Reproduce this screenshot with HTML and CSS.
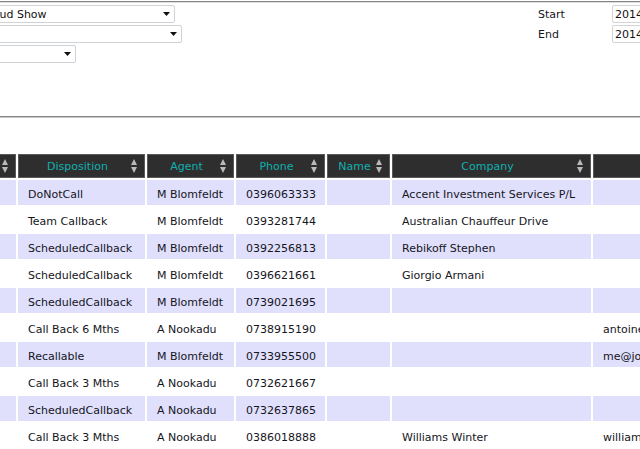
FILE: index.html
```html
<!DOCTYPE html>
<html>
<head>
<meta charset="utf-8">
<title>Call list</title>
<link rel="stylesheet" href="styles.css">
</head>
<body>
<div class="page">
  <div class="filters">
    <div class="selects">
      <div class="select w1"><span>Cloud Show</span><svg class="caret" width="7" height="4" viewBox="0 0 7 4"><polygon points="0,0 7,0 3.5,4" fill="#111"/></svg></div>
      <div class="select w2"><span></span><svg class="caret" width="7" height="4" viewBox="0 0 7 4"><polygon points="0,0 7,0 3.5,4" fill="#111"/></svg></div>
      <div class="select w3"><span></span><svg class="caret" width="7" height="4" viewBox="0 0 7 4"><polygon points="0,0 7,0 3.5,4" fill="#111"/></svg></div>
    </div>
    <div class="dates">
      <label class="date-label">Start</label>
      <div class="date-input">2014-06-01</div>
      <label class="date-label">End</label>
      <div class="date-input">2014-06-30</div>
    </div>
  </div>

  <table class="grid">
    <thead>
      <tr>
        <th class="c-id">Date<span class="sort"></span></th>
        <th class="c-disp">Disposition<span class="sort"></span></th>
        <th class="c-agent">Agent<span class="sort"></span></th>
        <th class="c-phone">Phone<span class="sort"></span></th>
        <th class="c-name">Name<span class="sort"></span></th>
        <th class="c-company">Company<span class="sort"></span></th>
        <th class="c-email">Email<span class="sort"></span></th>
        <th class="c-more">Notes<span class="sort"></span></th>
      </tr>
    </thead>
    <tbody>
      <tr><td></td><td>DoNotCall</td><td>M Blomfeldt</td><td>0396063333</td><td></td><td>Accent Investment Services P/L</td><td></td><td></td></tr>
      <tr><td></td><td>Team Callback</td><td>M Blomfeldt</td><td>0393281744</td><td></td><td>Australian Chauffeur Drive</td><td></td><td></td></tr>
      <tr><td></td><td>ScheduledCallback</td><td>M Blomfeldt</td><td>0392256813</td><td></td><td>Rebikoff Stephen</td><td></td><td></td></tr>
      <tr><td></td><td>ScheduledCallback</td><td>M Blomfeldt</td><td>0396621661</td><td></td><td>Giorgio Armani</td><td></td><td></td></tr>
      <tr><td></td><td>ScheduledCallback</td><td>M Blomfeldt</td><td>0739021695</td><td></td><td></td><td></td><td></td></tr>
      <tr><td></td><td>Call Back 6 Mths</td><td>A Nookadu</td><td>0738915190</td><td></td><td></td><td>antoine@ozemail.com.au</td><td></td></tr>
      <tr><td></td><td>Recallable</td><td>M Blomfeldt</td><td>0733955500</td><td></td><td></td><td>me@johnsmith.com.au</td><td></td></tr>
      <tr><td></td><td>Call Back 3 Mths</td><td>A Nookadu</td><td>0732621667</td><td></td><td></td><td></td><td></td></tr>
      <tr><td></td><td>ScheduledCallback</td><td>A Nookadu</td><td>0732637865</td><td></td><td></td><td></td><td></td></tr>
      <tr><td></td><td>Call Back 3 Mths</td><td>A Nookadu</td><td>0386018888</td><td></td><td>Williams Winter</td><td>william@williamswinter.com.au</td><td></td></tr>
    </tbody>
  </table>
</div>
</body>
</html>
```

FILE: styles.css
```css
html, body {
  margin: 0;
  padding: 0;
  background: #fff;
  overflow: hidden;
}

body {
  font-family: "DejaVu Sans", Verdana, sans-serif;
  font-size: 11px;
  color: #15151c;
}

.page {
  margin-left: -60px;
  width: 1100px;
}

/* filter panel */
.filters {
  box-sizing: border-box;
  height: 117px;
  margin-top: 1px;
  padding: 3px 0 0 38px;
  border-top: 1px solid #858585;
  border-bottom: 1px solid #c8c8c8;
  box-shadow: inset 0 1px 0 #dedede, inset 0 -1px 0 #858585;
  display: flex;
  align-items: flex-start;
}

.selects {
  width: 560px;
  display: flex;
  flex-direction: column;
  align-items: flex-start;
  gap: 2px;
}

.select {
  box-sizing: border-box;
  height: 18px;
  border: 1px solid #cfd2d6;
  border-radius: 2px;
  padding: 1px 4px 0 3px;
  display: flex;
  align-items: center;
  justify-content: space-between;
  background: #fff;
  font-size: 11px;
  color: #111;
}

.select.w1 { width: 197px; }
.select.w2 { width: 204px; }
.select.w3 { width: 98px; }

.caret {
  flex: none;
  display: block;
  margin-top: -1px;
}

.dates {
  display: grid;
  grid-template-columns: 74px 120px;
  row-gap: 2px;
  align-items: center;
}

.date-label {
  line-height: 18px;
  padding-top: 1px;
  height: 18px;
  box-sizing: border-box;
  color: #15151c;
}

.date-input {
  box-sizing: border-box;
  height: 18px;
  line-height: 16px;
  border: 1px solid #d4d4d4;
  border-radius: 2px;
  padding: 1px 2px 0;
  color: #111;
}

/* grid */
.grid {
  margin-top: 34px;
  border-collapse: separate;
  border-spacing: 2px;
  table-layout: fixed;
  width: 737px;
}

.grid th,
.grid td {
  box-sizing: border-box;
  white-space: nowrap;
  overflow: hidden;
}

.grid th {
  position: relative;
  height: 24px;
  padding: 1px 18px 0 10px;
  background: #2e2e2e;
  border: 1px solid #5a5a5a;
  color: #10b0ae;
  font-weight: normal;
  text-align: center;
}

.sort {
  position: absolute;
  right: 6px;
  top: 4px;
  width: 7px;
  height: 14px;
}

.sort::before,
.sort::after {
  content: "";
  position: absolute;
  left: 0;
  border-left: 3.5px solid transparent;
  border-right: 3.5px solid transparent;
}

.sort::before {
  top: 0;
  border-bottom: 6px solid #b9b9b9;
}

.sort::after {
  bottom: 0;
  border-top: 6px solid #b9b9b9;
}

.grid td {
  height: 25px;
  padding: 4px 10px 0;
  text-align: left;
}

.grid tbody tr:nth-child(odd) td {
  background: #e0e0fd;
}

.c-id { width: 74px; }
.c-disp { width: 127px; }
.c-agent { width: 87px; }
.c-phone { width: 89px; }
.c-name { width: 63px; }
.c-company { width: 199px; }
.c-email { width: 180px; }
.c-more { width: 100px; }
```
